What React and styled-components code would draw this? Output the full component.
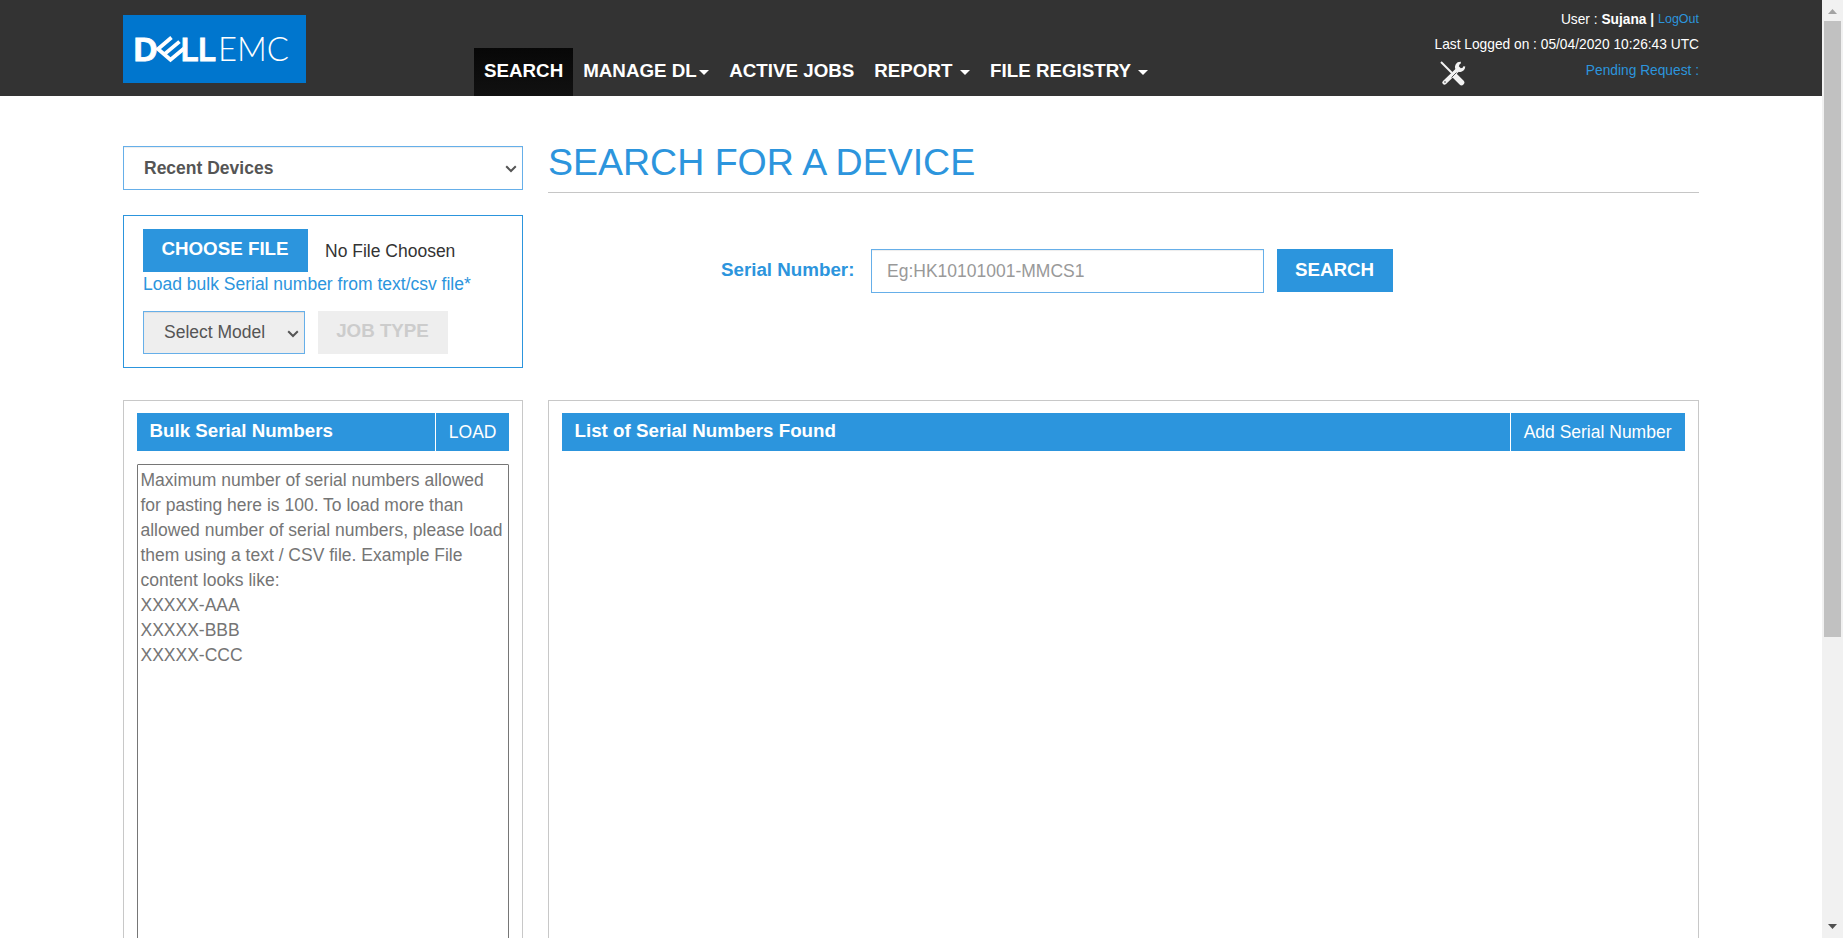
import React from "react";
import styled, { createGlobalStyle } from "styled-components";

const BLUE = "#2c95dd";

const GlobalStyle = createGlobalStyle`
  *, *::before, *::after { box-sizing: border-box; }
  html, body { margin: 0; height: 100%; overflow: hidden; background: #fff; }
  body, button, input, textarea {
    font-family: "Liberation Sans", Arial, Helvetica, sans-serif;
  }
  body { font-size: 17.5px; line-height: 25px; color: #333; }
`;

const Frame = styled.div`
  display: flex;
  height: 938px;
  overflow: hidden;
`;

const Page = styled.div`
  flex: 1;
  min-width: 0;
`;

const Header = styled.header`
  display: flex;
  height: 96px;
  padding: 0 123px;
  background: #333;
`;

const Logo = styled.svg`
  display: block;
  width: 183px;
  height: 68px;
  margin-top: 15px;
  flex: none;
  background: #0076ce;
`;

const Nav = styled.nav`
  display: flex;
  align-items: flex-end;
  margin-left: 168px;
`;

const NavItem = styled.a`
  display: flex;
  align-items: center;
  height: 48px;
  padding: 0 10px 3px;
  color: #fff;
  font-size: 18.75px;
  font-weight: bold;
  white-space: pre;
  background: ${(p) => (p.$active ? "linear-gradient(#070707, #111)" : "transparent")};
`;

const Caret = styled.span`
  width: 0;
  height: 0;
  margin: 4px 0 0 2.5px;
  border: 5px solid transparent;
  border-top-color: #fff;
  border-bottom: 0;
`;

const Account = styled.div`
  width: 265px;
  margin-left: auto;
  padding-top: 7px;
  color: #fff;
  font-size: 13.75px;
  white-space: nowrap;
`;

const AccountLine = styled.div`
  display: flex;
  justify-content: flex-end;
  height: 25px;
  white-space: pre;
`;

const AccountTools = styled.div`
  display: flex;
  justify-content: space-between;
  padding: 1px 0 0 6px;
`;

const ToolsIcon = styled.svg`
  width: 26px;
  height: 25px;
  margin-top: 3px;
`;

const Link = styled.a`
  color: ${BLUE};
  font-size: ${(p) => (p.$small ? "12.5px" : "inherit")};
`;

const Body = styled.main`
  display: grid;
  grid-template-columns: 400px 1151px;
  column-gap: 25px;
  padding: 50px 0 0 123px;
`;

const Field = styled.button`
  display: flex;
  align-items: center;
  justify-content: space-between;
  width: ${(p) => p.$width}px;
  height: ${(p) => p.$height}px;
  padding: 0 5px 0 20px;
  border: 1px solid #66afe9;
  background: ${(p) => (p.$muted ? "#eee" : "#fff")};
  box-shadow: inset 0 1px 1px rgba(0, 0, 0, 0.075);
  color: #555;
  font-size: 17.5px;
  font-weight: ${(p) => (p.$bold ? "bold" : "normal")};
`;

const Chevron = styled.svg`
  width: 12px;
  height: 8px;
  margin-top: 2px;
`;

const UploadBox = styled.section`
  height: 153px;
  margin-top: 25px;
  padding: 13px 19px 0;
  border: 1px solid ${BLUE};
`;

const Row = styled.div`
  display: flex;
  gap: ${(p) => p.$gap || 0}px;
  margin-top: ${(p) => p.$top || 0}px;
`;

const Button = styled.button`
  width: ${(p) => p.$width}px;
  height: 43px;
  padding: 0 1px ${(p) => (p.$lower ? 1 : 3)}px 0;
  border: 0;
  background: ${(p) => (p.$muted ? "#eee" : BLUE)};
  color: ${(p) => (p.$muted ? "#ccc" : "#fff")};
  font-size: 18.75px;
  font-weight: bold;
  white-space: nowrap;
`;

const FileName = styled.span`
  padding-top: 10px;
`;

const Hint = styled.div`
  height: 25px;
  color: ${BLUE};
  white-space: nowrap;
`;

const Title = styled.h1`
  height: 47px;
  margin: 0;
  border-bottom: 1px solid #c6c6c6;
  color: ${BLUE};
  font-size: 37.5px;
  font-weight: normal;
  line-height: 32px;
`;

const SearchForm = styled.form`
  display: flex;
  margin-top: 56px;
  padding-left: 173px;
`;

const Label = styled.label`
  width: 150px;
  padding-top: 8px;
  color: ${BLUE};
  font-size: 18.75px;
  font-weight: bold;
`;

const TextInput = styled.input`
  width: 393px;
  height: 44px;
  margin-right: 13px;
  padding: 0 15px;
  border: 1px solid #66afe9;
  outline: 0;
  box-shadow: inset 0 1px 1px rgba(0, 0, 0, 0.075);
  font-size: 17.5px;
  &::placeholder { color: #999; }
`;

const Panel = styled.section`
  height: 600px;
  margin-top: ${(p) => p.$top}px;
  padding: 12px 13px;
  border: 1px solid #c8c8c8;
`;

const PanelBar = styled.div`
  display: flex;
  height: 38px;
  background: ${BLUE};
  color: #fff;
  line-height: 37px;
`;

const PanelTitle = styled.div`
  flex: 1;
  padding-left: 12.5px;
  font-size: 18.75px;
  font-weight: bold;
  line-height: 36px;
`;

const PanelAction = styled.a`
  padding: 1px ${(p) => p.$pad || 12.5}px 0 12.5px;
  border-left: 1px solid #fff;
`;

const BulkText = styled.textarea`
  display: block;
  width: 372px;
  height: 488px;
  margin-top: 13px;
  padding: 2.5px;
  border: 1px solid #767676;
  border-radius: 1px;
  outline: 0;
  resize: none;
  font-size: 17.5px;
  line-height: 25px;
  &::placeholder { color: #757575; }
`;

const ScrollTrack = styled.div`
  display: flex;
  flex-direction: column;
  align-items: center;
  width: 21px;
  background: #f1f1f1;
`;

const ScrollThumb = styled.div`
  width: 17px;
  height: 616px;
  margin-bottom: auto;
  background: #c1c1c1;
`;

const ScrollArrow = styled.svg`
  display: block;
  width: 21px;
  height: 21px;
`;

function DellLogo() {
  return (
    <Logo viewBox="0 0 183 68" aria-label="DELL EMC">
      <g fill="#fff" fontFamily="Liberation Sans, Arial, sans-serif" fontWeight="bold" fontSize="33" stroke="#fff" strokeWidth="0.8">
        <text x="10.6" y="45.5" textLength="24" lengthAdjust="spacingAndGlyphs">D</text>
        <text x="58" y="45.5" textLength="35" lengthAdjust="spacingAndGlyphs">LL</text>
      </g>
      <path
        d="M48.5 22.5L35 34L47.5 44.8L61 33.5M41.2 39.4L56.5 26.6"
        stroke="#fff"
        strokeWidth="3.8"
        fill="none"
      />
      <text x="95" y="45.5" fill="#fff" fontFamily="Lato, sans-serif" fontWeight="300" fontSize="33.5" textLength="71" lengthAdjust="spacingAndGlyphs">EMC</text>
    </Logo>
  );
}

function Tools() {
  return (
    <ToolsIcon viewBox="0 0 26 25" fill="none" stroke="#f2f2f2">
      <path d="M1 1L12 12" strokeWidth="2" />
      <path d="M15 15L21.5 21.5" strokeWidth="5.5" strokeLinecap="round" />
      <path d="M17 9.5L4.5 21.5" strokeWidth="4.4" strokeLinecap="round" />
      <path d="M20.5 1.5A4.5 4.5 0 1 0 24.5 6.2L20.8 7.2L18.8 5.2Z" fill="#f2f2f2" stroke="none" />
      <path d="M20.8 1.8C16.8 1.6 15 5 16.5 8.3C18.5 11 23.7 10.3 24.3 5.3" strokeWidth="2" />
      <path d="M11.5 16.5L16.5 11.5" stroke="#333" strokeWidth="0.8" />
      <circle cx="5" cy="21" r="0.8" fill="#333" stroke="none" />
    </ToolsIcon>
  );
}

function Select({ children, ...props }) {
  return (
    <Field type="button" {...props}>
      {children}
      <Chevron viewBox="0 0 12 8">
        <path d="M1.2 1.3L6 6L10.8 1.3" fill="none" stroke="#555" strokeWidth="2" />
      </Chevron>
    </Field>
  );
}

const bulkHint =
  "Maximum number of serial numbers allowed for pasting here is 100. To load more than allowed number of serial numbers, please load them using a text / CSV file. Example File content looks like:\nXXXXX-AAA\nXXXXX-BBB\nXXXXX-CCC";

export default function App() {
  return (
    <>
      <GlobalStyle />
      <Frame>
        <Page>
          <Header>
            <DellLogo />
            <Nav>
              <NavItem $active>SEARCH</NavItem>
              <NavItem>MANAGE DL<Caret /></NavItem>
              <NavItem>ACTIVE JOBS</NavItem>
              <NavItem>{"REPORT "}<Caret /></NavItem>
              <NavItem>{"FILE REGISTRY "}<Caret /></NavItem>
            </Nav>
            <Account>
              <AccountLine>
                {"User : "}<b>{"Sujana | "}</b><Link $small>LogOut</Link>
              </AccountLine>
              <AccountLine>Last Logged on : 05/04/2020 10:26:43 UTC</AccountLine>
              <AccountTools>
                <Tools />
                <Link>Pending Request :</Link>
              </AccountTools>
            </Account>
          </Header>
          <Body>
            <div>
              <Select $width={400} $height={44} $bold>Recent Devices</Select>
              <UploadBox>
                <Row $gap={17}>
                  <Button $width={165}>CHOOSE FILE</Button>
                  <FileName>No File Choosen</FileName>
                </Row>
                <Hint>Load bulk Serial number from text/csv file*</Hint>
                <Row $gap={13} $top={14}>
                  <Select $width={162} $height={43} $muted>Select Model</Select>
                  <Button $width={130} $muted>JOB TYPE</Button>
                </Row>
              </UploadBox>
              <Panel $top={32}>
                <PanelBar>
                  <PanelTitle>Bulk Serial Numbers</PanelTitle>
                  <PanelAction>LOAD</PanelAction>
                </PanelBar>
                <BulkText placeholder={bulkHint} />
              </Panel>
            </div>
            <div>
              <Title>SEARCH FOR A DEVICE</Title>
              <SearchForm>
                <Label>Serial Number:</Label>
                <TextInput placeholder="Eg:HK10101001-MMCS1" />
                <Button type="button" $width={116} $lower>SEARCH</Button>
              </SearchForm>
              <Panel $top={107}>
                <PanelBar>
                  <PanelTitle>List of Serial Numbers Found</PanelTitle>
                  <PanelAction $pad={13.5}>Add Serial Number</PanelAction>
                </PanelBar>
              </Panel>
            </div>
          </Body>
        </Page>
        <ScrollTrack>
          <ScrollArrow viewBox="0 0 21 21"><path d="M6 14L10.5 9L15 14Z" fill="#a3a3a3" /></ScrollArrow>
          <ScrollThumb />
          <ScrollArrow viewBox="0 0 21 21"><path d="M6 7L10.5 12L15 7Z" fill="#505050" /></ScrollArrow>
        </ScrollTrack>
      </Frame>
    </>
  );
}
